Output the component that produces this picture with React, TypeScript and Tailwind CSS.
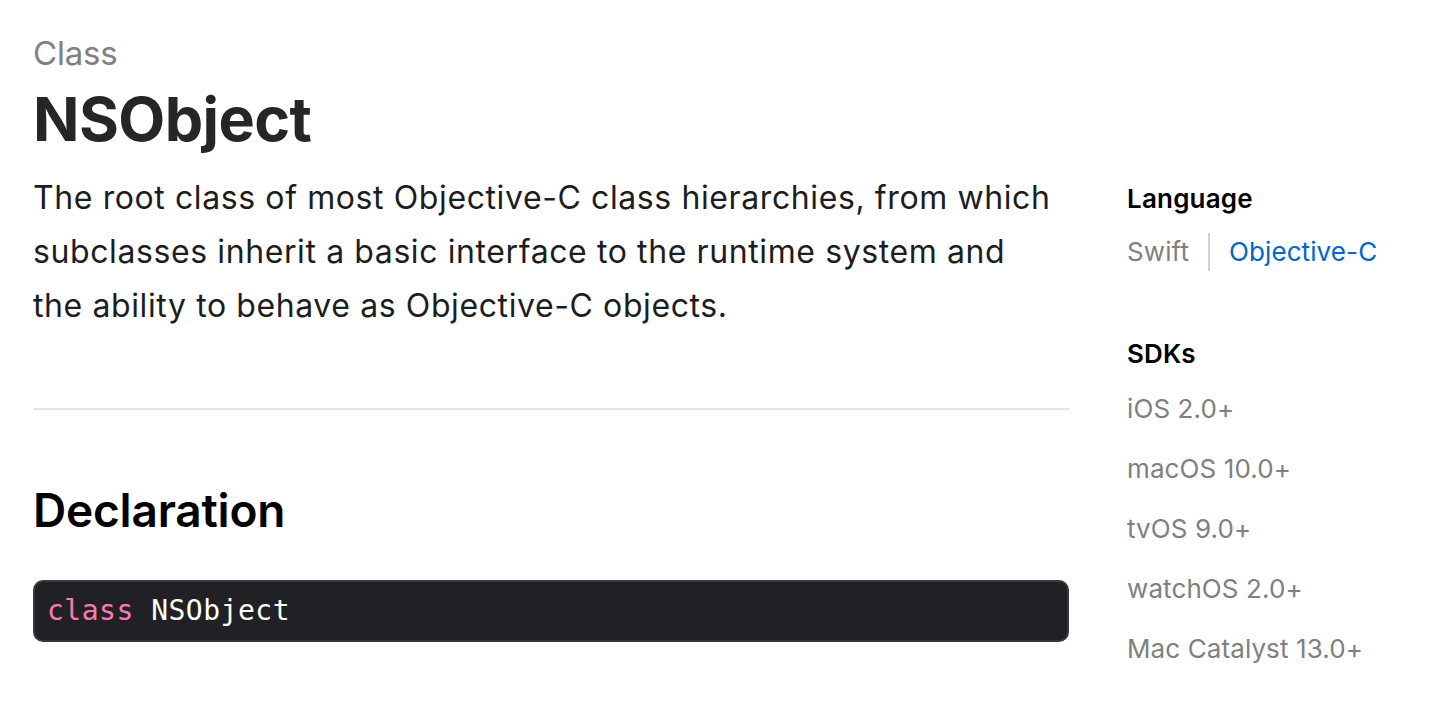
import React from "react";

const sans = { fontFamily: "Inter, 'Noto Sans', sans-serif" };

export default function App() {
  return (
    <div className="flex bg-white min-h-[726px] pl-[33px] pt-[31px]" style={sans}>
      <div className="w-[1036px] shrink-0">
        <div className="text-[33px] leading-[44px] text-[#808080] tracking-[-0.2px]">Class</div>
        <h1 className="mt-[7px] text-[61px] leading-[74px] font-bold text-[#262626] tracking-[-0.6px]">NSObject</h1>
        <p className="mt-[15px] pr-[12px] text-[32px] leading-[54px] text-[#1d1d1f] tracking-[0.6px]">
          The root class of most Objective-C class hierarchies, from which subclasses inherit a basic interface to the runtime system and the ability to behave as Objective-C objects.
        </p>
        <div className="mt-[75px] h-[2px] bg-[#e6e6e6]" />
        <h2 className="mt-[72px] text-[46px] leading-[56px] font-semibold text-black tracking-[-0.2px]">Declaration</h2>
        <div className="mt-[42px] h-[62px] rounded-[10px] bg-[#212125] border-2 border-[#38383c] flex items-center pl-[12px]">
          <span className="text-[28px] leading-[34px] tracking-[0.5px]" style={{ fontFamily: "'DejaVu Sans Mono', 'Liberation Mono', monospace" }}>
            <span className="text-[#ff7ab2]">class</span>
            <span className="text-white"> NSObject</span>
          </span>
        </div>
      </div>
      <div className="ml-[58px] pt-[150px] flex flex-col">
        <div className="text-[26px] leading-[36px] font-semibold text-black tracking-[0.2px]">Language</div>
        <div className="mt-[16px] flex items-center text-[26px] leading-[36px] tracking-[0.1px]">
          <span className="text-[#808080]">Swift</span>
          <span className="mx-[19px] w-[2px] h-[38px] bg-[#d2d2d2]" />
          <span className="text-[#0066cc]">Objective-C</span>
        </div>
        <div className="mt-[65px] text-[26px] leading-[36px] font-semibold text-black tracking-[0.1px]">SDKs</div>
        <div className="mt-[19px] flex flex-col gap-[24px] text-[26px] leading-[36px] text-[#808080] tracking-[0.1px]">
          <div>iOS 2.0+</div>
          <div>macOS 10.0+</div>
          <div>tvOS 9.0+</div>
          <div>watchOS 2.0+</div>
          <div>Mac Catalyst 13.0+</div>
        </div>
      </div>
    </div>
  );
}
